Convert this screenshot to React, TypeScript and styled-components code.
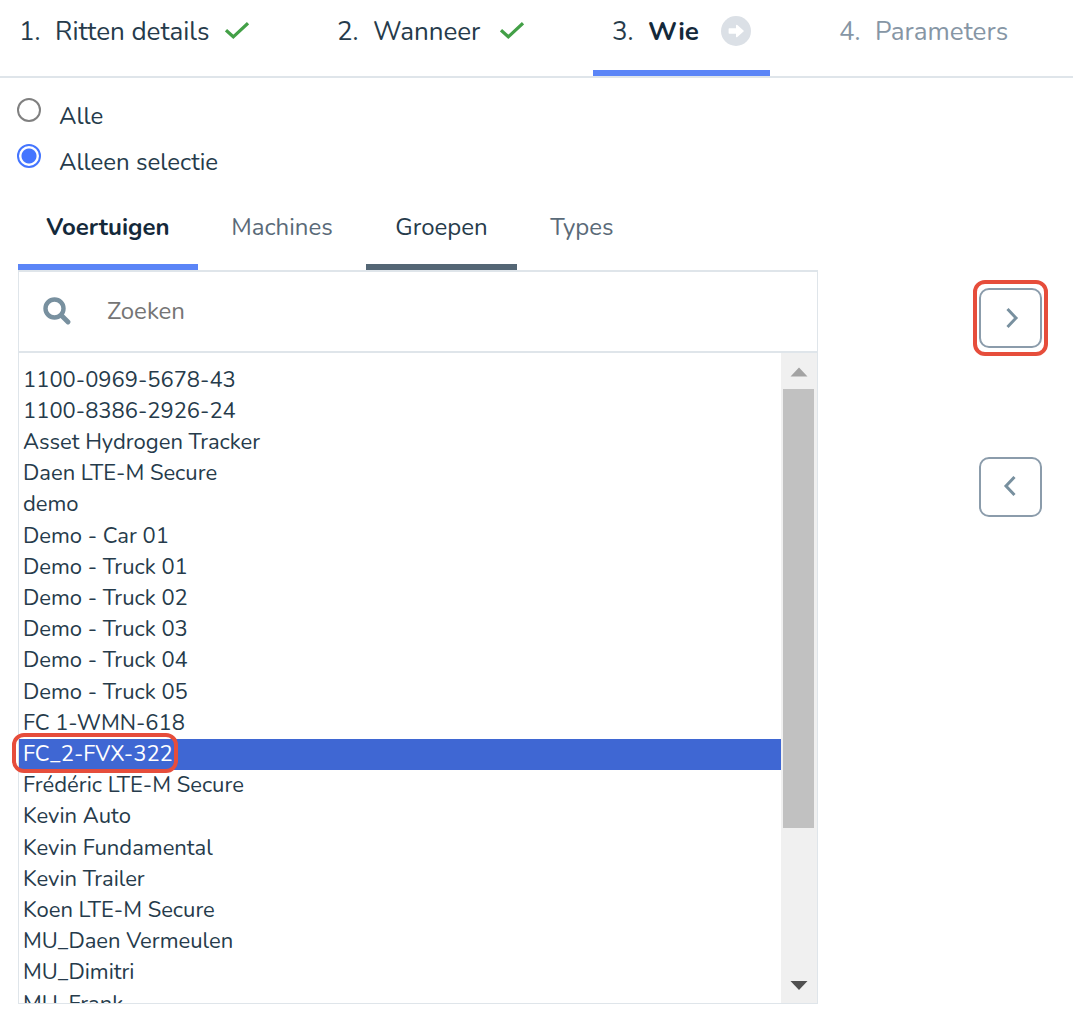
import React, { useRef, useState } from "react";
import styled, { createGlobalStyle } from "styled-components";

const colors = {
  ink: "#263b4b",
  strong: "#14293a",
  muted: "#8696a5",
  tab: "#5a6a78",
  slate: "#546675",
  icon: "#78909f",
  line: "#dfe5ea",
  blue: "#5b85f7",
  radio: "#4475ff",
  selected: "#3f67d3",
  green: "#43a047",
  red: "#e64d3b",
};

const GlobalStyle = createGlobalStyle`
  *, *::before, *::after { box-sizing: border-box; }
  body {
    margin: 0;
    background: #fff;
    color: ${colors.ink};
    font-family: Nunito, Lato, "Open Sans", sans-serif;
    font-size: 24px;
  }
  button, input, select { font: inherit; color: inherit; }
`;

const Steps = styled.nav`
  display: grid;
  grid-template-columns: 268px 225px 177px 1fr;
  gap: 50px;
  height: 78px;
  border-bottom: 2px solid ${colors.line};
`;

const Step = styled.button<{ $state: "done" | "active" | "todo" }>`
  display: flex;
  align-items: center;
  padding: 0 19px 8px;
  border: 0;
  border-bottom: 6px solid ${(p) => (p.$state === "active" ? colors.blue : "transparent")};
  background: none;
  font-size: 26px;
  line-height: 32px;
  white-space: nowrap;
  color: ${(p) => (p.$state === "todo" ? colors.muted : colors.ink)};
`;

const StepNumber = styled.span`
  width: 36px;
  padding-top: 2px;
  text-align: left;
`;

const StepLabel = styled.span<{ $strong: boolean }>`
  padding-top: 2px;
  font-weight: ${(p) => (p.$strong ? 700 : 400)};
  color: ${(p) => (p.$strong ? colors.strong : "inherit")};
`;

const StepIcon = styled.svg`
  margin-left: auto;
  flex: none;
`;

const RadioGroup = styled.div`
  display: flex;
  flex-direction: column;
  gap: 14px;
  padding: 20px 17px 0;
`;

const RadioLabel = styled.label`
  display: flex;
  align-items: flex-start;
  gap: 18px;
  height: 32px;
  line-height: 36px;
`;

const Radio = styled.input`
  appearance: none;
  width: 24px;
  height: 24px;
  margin: 0;
  border: 2px solid #808080;
  border-radius: 50%;
  background: #fff;
  &:checked {
    border-color: ${colors.radio};
    background: radial-gradient(circle, ${colors.radio} 7px, #fff 8px);
  }
`;

const Content = styled.main`
  display: flex;
  padding: 10px 25px 16px 18px;
`;

const Picker = styled.section`
  flex: 1;
  min-width: 0;
`;

const Tabs = styled.div`
  display: grid;
  grid-template-columns: 180px 160px 151px 122px;
  gap: 4px;
  height: 86px;
  border-bottom: 2px solid ${colors.line};
`;

const Tab = styled.button<{ $bar?: string; $color?: string; $strong?: boolean }>`
  padding: 3px 0 0;
  border: 0;
  border-bottom: 6px solid ${(p) => p.$bar ?? "transparent"};
  background: none;
  line-height: 32px;
  color: ${(p) => p.$color ?? colors.tab};
  font-weight: ${(p) => (p.$strong ? 700 : 400)};
`;

const Panel = styled.div`
  border: 1px solid ${colors.line};
  border-top: 0;
`;

const Search = styled.label`
  display: flex;
  align-items: center;
  gap: 36px;
  height: 81px;
  padding: 0 24px 2px;
  border-bottom: 2px solid ${colors.line};
`;

const SearchInput = styled.input`
  flex: 1;
  min-width: 0;
  padding: 0;
  border: 0;
  outline: 0;
  background: none;
  &::placeholder { color: #757575; opacity: 1; }
`;

const ListFrame = styled.div`
  position: relative;
  display: flex;
  height: 650px;
`;

const List = styled.select`
  flex: 1;
  min-width: 0;
  height: 100%;
  padding: 12px 0 0;
  border: 0;
  border-radius: 0;
  outline: 0;
  background: #fff;
  font-size: 22px;
  overflow-y: auto;
  scrollbar-width: none;
`;

const Item = styled.option`
  min-height: 31px;
  padding: 0 4px;
  line-height: 31px;
  color: ${colors.ink};
  &:nth-child(5n) { margin-bottom: 1px; }
  &:checked {
    color: #fff;
    background: ${colors.selected} linear-gradient(${colors.selected}, ${colors.selected});
  }
`;

const Scrollbar = styled.div`
  display: flex;
  flex-direction: column;
  width: 36px;
  background: #f0f0f0;
`;

const ScrollButton = styled.button`
  display: grid;
  place-items: center;
  height: 36px;
  padding: 2px 0 0;
  border: 0;
  background: none;
`;

const Track = styled.div`
  flex: 1;
  padding: 0 3px 0 2px;
`;

const Thumb = styled.div`
  height: 76%;
  background: #c1c1c1;
`;

const RowMark = styled.span`
  position: absolute;
  top: 380px;
  left: -7px;
  width: 166px;
  height: 40px;
  border: 4px solid ${colors.red};
  border-radius: 12px;
  pointer-events: none;
`;

const Actions = styled.div`
  display: flex;
  flex-direction: column;
  align-items: flex-end;
  gap: 93px;
  width: 230px;
  padding-top: 94px;
`;

const ActionSlot = styled.div<{ $marked?: boolean }>`
  padding: 4px 2px;
  border: 4px solid ${(p) => (p.$marked ? colors.red : "transparent")};
  border-radius: 12px;
`;

const ActionButton = styled.button`
  display: grid;
  place-items: center;
  width: 63px;
  height: 60px;
  padding: 0;
  border: 2px solid #8b9cab;
  border-radius: 10px;
  background: #fff;
`;

const Check = () => (
  <StepIcon width="24" height="18" viewBox="0 0 24 18" aria-hidden="true">
    <path d="M1 8.2 8.3 14.8 23 1.2" fill="none" stroke={colors.green} strokeWidth="3.2" />
  </StepIcon>
);

const Next = () => (
  <StepIcon width="30" height="30" viewBox="0 0 30 30" aria-hidden="true">
    <circle cx="15" cy="15" r="15" fill="#dbe0e6" />
    <path
      d="M8.4 13h7.4V9.6L22 15l-6.2 5.4V17H8.4z"
      fill="#fff"
      stroke="#fff"
      strokeWidth="1.6"
      strokeLinejoin="round"
    />
  </StepIcon>
);

const vehicles = [
  "1100-0969-5678-43",
  "1100-8386-2926-24",
  "Asset Hydrogen Tracker",
  "Daen LTE-M Secure",
  "demo",
  "Demo - Car 01",
  "Demo - Truck 01",
  "Demo - Truck 02",
  "Demo - Truck 03",
  "Demo - Truck 04",
  "Demo - Truck 05",
  "FC 1-WMN-618",
  "FC_2-FVX-322",
  "Frédéric LTE-M Secure",
  "Kevin Auto",
  "Kevin Fundamental",
  "Kevin Trailer",
  "Koen LTE-M Secure",
  "MU_Daen Vermeulen",
  "MU_Dimitri",
  "MU_Frank",
];

export default function App() {
  const [scope, setScope] = useState("selection");
  const [query, setQuery] = useState("");
  const list = useRef<HTMLSelectElement>(null);
  const scroll = (delta: number) => list.current?.scrollBy({ top: delta });
  const shown = vehicles.filter((v) => v.toLowerCase().includes(query.toLowerCase()));

  return (
    <>
      <GlobalStyle />
      <Steps>
        <Step type="button" $state="done">
          <StepNumber>1.</StepNumber>
          <StepLabel $strong={false}>Ritten details</StepLabel>
          <Check />
        </Step>
        <Step type="button" $state="done">
          <StepNumber>2.</StepNumber>
          <StepLabel $strong={false}>Wanneer</StepLabel>
          <Check />
        </Step>
        <Step type="button" $state="active" aria-current="step">
          <StepNumber>3.</StepNumber>
          <StepLabel $strong>Wie</StepLabel>
          <Next />
        </Step>
        <Step type="button" $state="todo">
          <StepNumber>4.</StepNumber>
          <StepLabel $strong={false}>Parameters</StepLabel>
        </Step>
      </Steps>

      <RadioGroup role="radiogroup">
        <RadioLabel>
          <Radio type="radio" name="scope" checked={scope === "all"} onChange={() => setScope("all")} />
          Alle
        </RadioLabel>
        <RadioLabel>
          <Radio type="radio" name="scope" checked={scope === "selection"} onChange={() => setScope("selection")} />
          Alleen selectie
        </RadioLabel>
      </RadioGroup>

      <Content>
        <Picker>
          <Tabs role="tablist">
            <Tab type="button" role="tab" aria-selected="true" $bar={colors.blue} $color={colors.strong} $strong>
              Voertuigen
            </Tab>
            <Tab type="button" role="tab">Machines</Tab>
            <Tab type="button" role="tab" $bar={colors.slate} $color={colors.ink}>Groepen</Tab>
            <Tab type="button" role="tab">Types</Tab>
          </Tabs>
          <Panel>
            <Search>
              <svg width="28" height="28" viewBox="0 0 28 28" fill="none" stroke={colors.icon} aria-hidden="true">
                <circle cx="11.5" cy="11.5" r="9" strokeWidth="4.4" />
                <path d="m18.5 18.5 6.5 6.5" strokeWidth="4.8" strokeLinecap="round" />
              </svg>
              <SearchInput
                type="text"
                placeholder="Zoeken"
                value={query}
                onChange={(e) => setQuery(e.target.value)}
              />
            </Search>
            <ListFrame>
              <List ref={list} multiple size={20} defaultValue={["FC_2-FVX-322"]} aria-label="Voertuigen">
                {shown.map((v) => (
                  <Item key={v} value={v}>{v}</Item>
                ))}
              </List>
              <Scrollbar>
                <ScrollButton type="button" tabIndex={-1} onClick={() => scroll(-31)}>
                  <svg width="18" height="10" viewBox="0 0 18 10" aria-hidden="true">
                    <path d="M0.5 9.5 9 0.5l8.5 9z" fill="#a3a3a3" />
                  </svg>
                </ScrollButton>
                <Track>
                  <Thumb />
                </Track>
                <ScrollButton type="button" tabIndex={-1} onClick={() => scroll(31)}>
                  <svg width="18" height="10" viewBox="0 0 18 10" aria-hidden="true">
                    <path d="M0.5 0h17L9 9z" fill="#505050" />
                  </svg>
                </ScrollButton>
              </Scrollbar>
              <RowMark />
            </ListFrame>
          </Panel>
        </Picker>

        <Actions>
          <ActionSlot $marked>
            <ActionButton type="button" aria-label="Toevoegen">
              <svg width="16" height="22" viewBox="0 0 16 22" fill="none" stroke={colors.icon} strokeWidth="3" aria-hidden="true">
                <path d="m4.5 2 8.5 9-8.5 9" />
              </svg>
            </ActionButton>
          </ActionSlot>
          <ActionSlot>
            <ActionButton type="button" aria-label="Verwijderen">
              <svg width="16" height="22" viewBox="0 0 16 22" fill="none" stroke={colors.icon} strokeWidth="3" aria-hidden="true">
                <path d="M11.5 1 3 10l8.5 9" />
              </svg>
            </ActionButton>
          </ActionSlot>
        </Actions>
      </Content>
    </>
  );
}
